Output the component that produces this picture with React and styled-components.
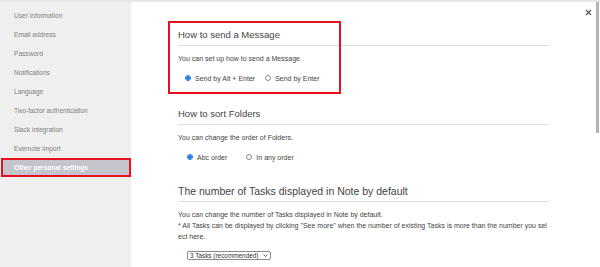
import React from 'react'
import styled, { createGlobalStyle } from "styled-components";

const GlobalStyle = createGlobalStyle`
  html, body {
    margin: 0;
    padding: 0;
    background: #fff;
  }
  body {
    font-family: "Liberation Sans", Arial, sans-serif;
    color: #333;
  }
`;

const Frame = styled.div`
  display: flex;
  height: 267px;
  border-top: 2px solid #e6e6e6;
  box-sizing: border-box;
  overflow: hidden;
  position: relative;
`;

const Sidebar = styled.nav`
  width: 131px;
  flex-shrink: 0;
  background-color: #efefef;
  padding-top: 4px;
  box-sizing: border-box;
`;

const NavItem = styled.div`
  height: 19px;
  line-height: ${(p) => (p.$active ? "15px" : "19px")};
  padding-left: ${(p) => (p.$active ? "11px" : "14px")};
  margin-left: ${(p) => (p.$active ? "1px" : "0")};
  font-size: 6.6px;
  color: ${(p) => (p.$active ? "#fff" : "#808080")};
  font-weight: ${(p) => (p.$active ? "bold" : "normal")};
  background-color: ${(p) => (p.$active ? "#c4c5cc" : "transparent")};
  border: ${(p) => (p.$active ? "2px solid #e8101c" : "none")};
  box-sizing: border-box;
  white-space: nowrap;
`;

const Main = styled.main`
  flex: 1;
  position: relative;
  padding: 26px 0 0 47px;
`;

const Content = styled.div`
  width: 371px;
`;

const Section = styled.section`
  position: relative;
  margin-bottom: ${(p) => p.$gap || "0"};
`;

const Heading = styled.h2`
  margin: 0;
  font-size: ${(p) => (p.$big ? "10.5px" : "9.5px")};
  font-weight: normal;
  line-height: 14px;
  color: #444;
  padding-bottom: 3px;
  border-bottom: 1px solid #dcdcdc;
`;

const Desc = styled.p`
  margin: 7px 0 0;
  font-size: 7px;
  line-height: 11px;
  color: #444;
  word-break: break-all;
`;

const Options = styled.div`
  display: flex;
  align-items: center;
  margin-top: ${(p) => p.$top || "9px"};
  padding-left: ${(p) => p.$indent || "7px"};
  gap: ${(p) => p.$spacing || "10px"};
  height: 10px;
`;

const Option = styled.label`
  display: flex;
  align-items: center;
  gap: 4px;
  font-size: 7px;
  color: #444;
`;

const Radio = styled.span`
  width: 6px;
  height: 6px;
  border-radius: 50%;
  box-sizing: border-box;
  border: 1px solid ${(p) => (p.$checked ? "#1a73e8" : "#8a8a8a")};
  background: ${(p) => (p.$checked ? "radial-gradient(circle, #1a73e8 55%, #fff 60%)" : "#fff")};
  flex-shrink: 0;
`;

const SelectWrap = styled.div`
  position: relative;
  display: inline-block;
  margin: 9px 0 0 9px;
`;

const Select = styled.select`
  display: block;
  appearance: none;
  width: 84px;
  height: 9px;
  font-family: "Liberation Sans", Arial, sans-serif;
  font-size: 6.4px;
  line-height: 7px;
  padding: 0 0 0 2px;
  color: #333;
  border: 1px solid #8a8a8a;
  border-radius: 2px;
  background: #fff;
  box-sizing: border-box;
`;

const Chevron = styled.svg`
  position: absolute;
  right: 3px;
  top: 3px;
  pointer-events: none;
`;

const Highlight = styled.div`
  position: absolute;
  top: -7px;
  left: -10px;
  width: 173px;
  height: 73px;
  border: 2px solid #e8101c;
  box-sizing: border-box;
  pointer-events: none;
`;

const CloseButton = styled.button`
  position: absolute;
  top: 6px;
  right: 8px;
  width: 8px;
  height: 8px;
  padding: 0;
  border: none;
  background: none;
  display: flex;
  align-items: center;
  justify-content: center;
`;

const ScrollThumb = styled.div`
  position: absolute;
  top: 0;
  right: 1px;
  width: 3px;
  height: 131px;
  background-color: #b3b3b3;
`;

const navItems = [
  "User information",
  "Email address",
  "Password",
  "Notifications",
  "Language",
  "Two-factor authentication",
  "Slack integration",
  "Evernote import",
  "Other personal settings",
];

function App() {
  return (
    <>
      <GlobalStyle />
      <Frame>
        <Sidebar>
          {navItems.map((item) => (
            <NavItem key={item} $active={item === "Other personal settings"}>
              {item}
            </NavItem>
          ))}
        </Sidebar>
        <Main>
          <Content>
            <Section $gap="24px">
              <Heading>How to send a Message</Heading>
              <Desc>You can set up how to send a Message.</Desc>
              <Options>
                <Option><Radio $checked />Send by Alt + Enter</Option>
                <Option><Radio />Send by Enter</Option>
              </Options>
              <Highlight />
            </Section>
            <Section $gap="22px">
              <Heading>How to sort Folders</Heading>
              <Desc>You can change the order of Folders.</Desc>
              <Options $top="9px" $indent="9px" $spacing="19px">
                <Option><Radio $checked />Abc order</Option>
                <Option><Radio />In any order</Option>
              </Options>
            </Section>
            <Section>
              <Heading $big>The number of Tasks displayed in Note by default</Heading>
              <Desc>
                You can change the number of Tasks displayed in Note by default.<br />
                * All Tasks can be displayed by clicking "See more" when the number of existing Tasks is more than the number you select here.
              </Desc>
              <SelectWrap>
                <Select defaultValue="3">
                  <option value="3">3 Tasks (recommended)</option>
                  <option value="5">5 Tasks</option>
                  <option value="10">10 Tasks</option>
                </Select>
                <Chevron width="5" height="3" viewBox="0 0 5 3">
                  <path d="M0.5 0.5L2.5 2.5L4.5 0.5" fill="none" stroke="#333" strokeWidth="0.8" />
                </Chevron>
              </SelectWrap>
            </Section>
          </Content>
          <CloseButton aria-label="Close">
            <svg width="7" height="7" viewBox="0 0 7 7">
              <path d="M1 1L6 6M6 1L1 6" stroke="#555" strokeWidth="1.2" />
            </svg>
          </CloseButton>
          <ScrollThumb />
        </Main>
      </Frame>
    </>
  )
}

export default App
